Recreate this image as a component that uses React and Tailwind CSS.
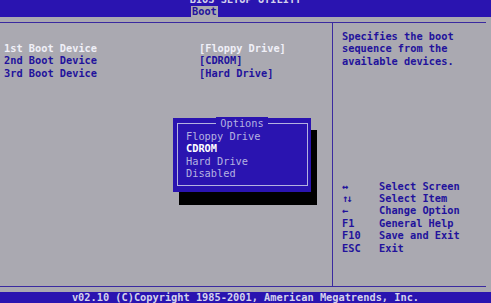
import React from "react";

// BIOS setup screen, Boot tab with the Options popup open
const bootRows = [
  { label: "1st Boot Device", value: "[Floppy Drive]", active: true },
  { label: "2nd Boot Device", value: "[CDROM]" },
  { label: "3rd Boot Device", value: "[Hard Drive]" },
];

const helpKeys = [
  { key: "↔", text: "Select Screen", arrow: true },
  { key: "↑↓", text: "Select Item", arrow: true },
  { key: "←", text: "Change Option", arrow: true },
  { key: "F1", text: "General Help" },
  { key: "F10", text: "Save and Exit" },
  { key: "ESC", text: "Exit" },
];

const options = ["Floppy Drive", "CDROM", "Hard Drive", "Disabled"];

export default function App() {
  return (
    <div
      className="relative flex flex-col w-[491px] h-[303px] overflow-hidden bg-[#aaa9b1] text-[10.3px] font-bold leading-[12.4px]"
      style={{ fontFamily: '"DejaVu Sans Mono", "Liberation Mono", monospace' }}
    >
      {/* top bar */}
      <div className="relative h-[17px] bg-[#2a14b0] shrink-0">
        <div className="absolute left-0 right-0 top-[-7px] text-center text-[#d4d2ec]">
          BIOS SETUP UTILITY
        </div>
        <div className="absolute left-[191px] top-[6px] h-[11px] px-[1px] bg-[#aaa9b1] text-[#22129c] leading-[11px]">
          Boot
        </div>
      </div>

      {/* main panel */}
      <div className="flex mt-[5px] w-[486px] h-[265px] border-t border-b border-[#3a2aa0] shrink-0">
        <div className="w-[333px] border-r border-[#3a2aa0] pt-[19px] pl-[4px]">
          {bootRows.map((row) => (
            <div
              key={row.label}
              className={`flex ${row.active ? "text-[#f0f0f8]" : "text-[#22129c]"}`}
            >
              <span className="w-[195px]">{row.label}</span>
              <span>{row.value}</span>
            </div>
          ))}
        </div>
        <div className="flex flex-col flex-1 pl-[9px] pt-[7px] pb-[32px] text-[#22129c]">
          <div>Specifies the boot</div>
          <div>sequence from the</div>
          <div>available devices.</div>
          <div className="mt-auto">
            {helpKeys.map((h) => (
              <div key={h.key} className="flex">
                <span className={`w-[37px] ${h.arrow ? "tracking-[-2px]" : ""}`}>
                  {h.key}
                </span>
                <span>{h.text}</span>
              </div>
            ))}
          </div>
        </div>
      </div>

      {/* footer */}
      <div className="mt-auto h-[11px] bg-[#2a14b0] text-center text-[#d4d2ec] leading-[11px] shrink-0">
        v02.10 (C)Copyright 1985-2001, American Megatrends, Inc.
      </div>

      {/* options popup */}
      <div className="absolute left-[179px] top-[130px] w-[138px] h-[75px] bg-black" />
      <div className="absolute left-[173px] top-[118px] w-[138px] h-[74px] bg-[#2a14b0]">
        <div className="absolute left-[4px] right-[3px] top-[5px] bottom-[6px] border border-[#b4b2e0]" />
        <div className="absolute left-0 right-0 top-[-1px] flex justify-center">
          <span className="relative bg-[#2a14b0] px-[4px] text-[#b4b2e0] font-normal">Options</span>
        </div>
        <div className="absolute left-[13px] top-[12px] font-normal">
          {options.map((o) => (
            <div
              key={o}
              className={o === "CDROM" ? "text-white font-bold" : "text-[#b4b2e0]"}
            >
              {o}
            </div>
          ))}
        </div>
      </div>
    </div>
  );
}
